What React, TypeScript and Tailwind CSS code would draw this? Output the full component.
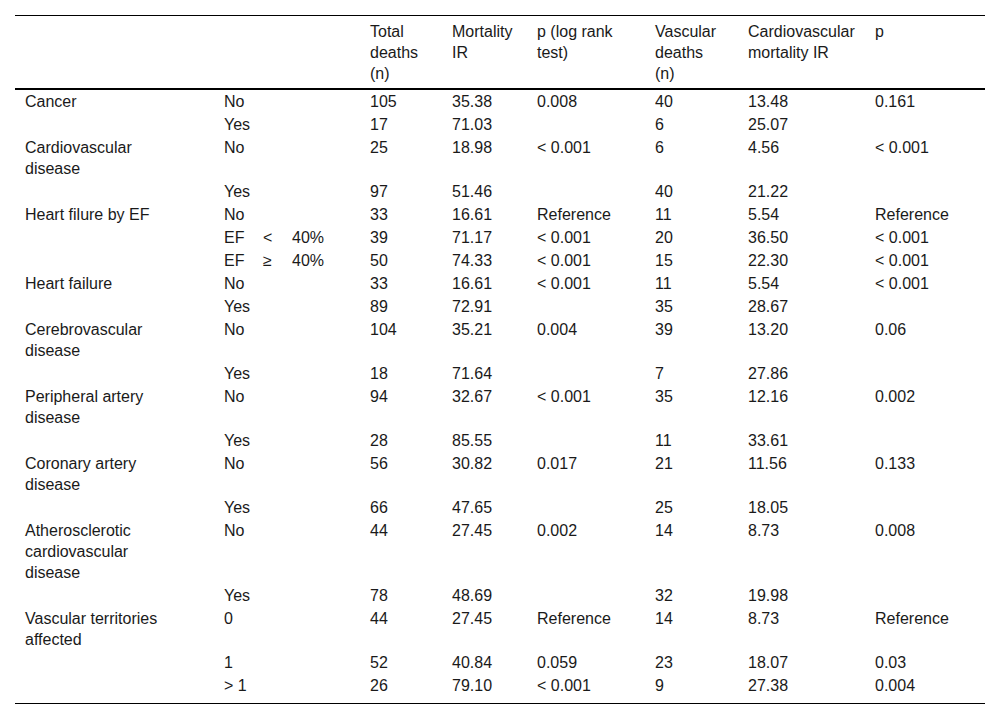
// Mortality table: deaths and incidence rates by comorbidity

type Row = {
  label?: string;
  group: React.ReactNode;
  total: string;
  ir: string;
  p: string;
  vasc: string;
  cvIr: string;
  cvP: string;
};

const EfLabel = ({ sign }: { sign: string }) => (
  <span className="whitespace-nowrap">
    <span className="inline-block w-[39px]">EF</span>
    <span className="inline-block w-[29px]">{sign}</span>
    <span>40%</span>
  </span>
);

const rows: Row[] = [
  { label: 'Cancer', group: 'No', total: '105', ir: '35.38', p: '0.008', vasc: '40', cvIr: '13.48', cvP: '0.161' },
  { group: 'Yes', total: '17', ir: '71.03', p: '', vasc: '6', cvIr: '25.07', cvP: '' },
  { label: 'Cardiovascular disease', group: 'No', total: '25', ir: '18.98', p: '< 0.001', vasc: '6', cvIr: '4.56', cvP: '< 0.001' },
  { group: 'Yes', total: '97', ir: '51.46', p: '', vasc: '40', cvIr: '21.22', cvP: '' },
  { label: 'Heart filure by EF', group: 'No', total: '33', ir: '16.61', p: 'Reference', vasc: '11', cvIr: '5.54', cvP: 'Reference' },
  { group: <EfLabel sign="<" />, total: '39', ir: '71.17', p: '< 0.001', vasc: '20', cvIr: '36.50', cvP: '< 0.001' },
  { group: <EfLabel sign="≥" />, total: '50', ir: '74.33', p: '< 0.001', vasc: '15', cvIr: '22.30', cvP: '< 0.001' },
  { label: 'Heart failure', group: 'No', total: '33', ir: '16.61', p: '< 0.001', vasc: '11', cvIr: '5.54', cvP: '< 0.001' },
  { group: 'Yes', total: '89', ir: '72.91', p: '', vasc: '35', cvIr: '28.67', cvP: '' },
  { label: 'Cerebrovascular disease', group: 'No', total: '104', ir: '35.21', p: '0.004', vasc: '39', cvIr: '13.20', cvP: '0.06' },
  { group: 'Yes', total: '18', ir: '71.64', p: '', vasc: '7', cvIr: '27.86', cvP: '' },
  { label: 'Peripheral artery disease', group: 'No', total: '94', ir: '32.67', p: '< 0.001', vasc: '35', cvIr: '12.16', cvP: '0.002' },
  { group: 'Yes', total: '28', ir: '85.55', p: '', vasc: '11', cvIr: '33.61', cvP: '' },
  { label: 'Coronary artery disease', group: 'No', total: '56', ir: '30.82', p: '0.017', vasc: '21', cvIr: '11.56', cvP: '0.133' },
  { group: 'Yes', total: '66', ir: '47.65', p: '', vasc: '25', cvIr: '18.05', cvP: '' },
  { label: 'Atherosclerotic cardiovascular disease', group: 'No', total: '44', ir: '27.45', p: '0.002', vasc: '14', cvIr: '8.73', cvP: '0.008' },
  { group: 'Yes', total: '78', ir: '48.69', p: '', vasc: '32', cvIr: '19.98', cvP: '' },
  { label: 'Vascular territories affected', group: '0', total: '44', ir: '27.45', p: 'Reference', vasc: '14', cvIr: '8.73', cvP: 'Reference' },
  { group: '1', total: '52', ir: '40.84', p: '0.059', vasc: '23', cvIr: '18.07', cvP: '0.03' },
  { group: '> 1', total: '26', ir: '79.10', p: '< 0.001', vasc: '9', cvIr: '27.38', cvP: '0.004' },
];

export default function App() {
  return (
    <div className="min-h-screen bg-white pt-[15px] text-[16px] leading-[21px] text-[#1a1a1a] font-['Liberation_Sans',Arial,sans-serif]">
      <table className="ml-[15px] w-[970px] table-fixed border-separate border-spacing-0">
        <colgroup>
          <col className="w-[199px]" />
          <col className="w-[146px]" />
          <col className="w-[82px]" />
          <col className="w-[85px]" />
          <col className="w-[118px]" />
          <col className="w-[93px]" />
          <col className="w-[127px]" />
          <col className="w-[120px]" />
        </colgroup>
        <thead>
          <tr className="align-top text-left">
            <th className="border-t border-b-2 border-black pl-[10px] pr-[8px] pt-[5px] pb-[4px] font-normal"></th>
            <th className="border-t border-b-2 border-black pl-[10px] pr-[8px] pt-[5px] pb-[4px] font-normal"></th>
            <th className="border-t border-b-2 border-black pl-[10px] pr-[16px] pt-[5px] pb-[4px] font-normal">Total deaths (n)</th>
            <th className="border-t border-b-2 border-black pl-[10px] pr-[12px] pt-[5px] pb-[4px] font-normal">Mortality IR</th>
            <th className="border-t border-b-2 border-black pl-[10px] pr-[8px] pt-[5px] pb-[4px] font-normal">p (log rank test)</th>
            <th className="border-t border-b-2 border-black pl-[10px] pr-[16px] pt-[5px] pb-[4px] font-normal">Vascular deaths (n)</th>
            <th className="border-t border-b-2 border-black pl-[10px] pr-[8px] pt-[5px] pb-[4px] font-normal">Cardiovascular mortality IR</th>
            <th className="border-t border-b-2 border-black pl-[10px] pr-[8px] pt-[5px] pb-[4px] font-normal">p</th>
          </tr>
        </thead>
        <tbody>
          {rows.map((r, i) => {
            const last = i === rows.length - 1;
            const cell = last
              ? 'pl-[10px] pr-[8px] pt-[1px] pb-[7px] border-b border-black'
              : 'pl-[10px] pr-[8px] py-[1px]';
            return (
              <tr key={i} className="align-top">
                <td className={`${cell} !pr-[50px]`}>{r.label ?? ''}</td>
                <td className={cell}>{r.group}</td>
                <td className={cell}>{r.total}</td>
                <td className={cell}>{r.ir}</td>
                <td className={cell}>{r.p}</td>
                <td className={cell}>{r.vasc}</td>
                <td className={cell}>{r.cvIr}</td>
                <td className={cell}>{r.cvP}</td>
              </tr>
            );
          })}
        </tbody>
      </table>
    </div>
  );
}
